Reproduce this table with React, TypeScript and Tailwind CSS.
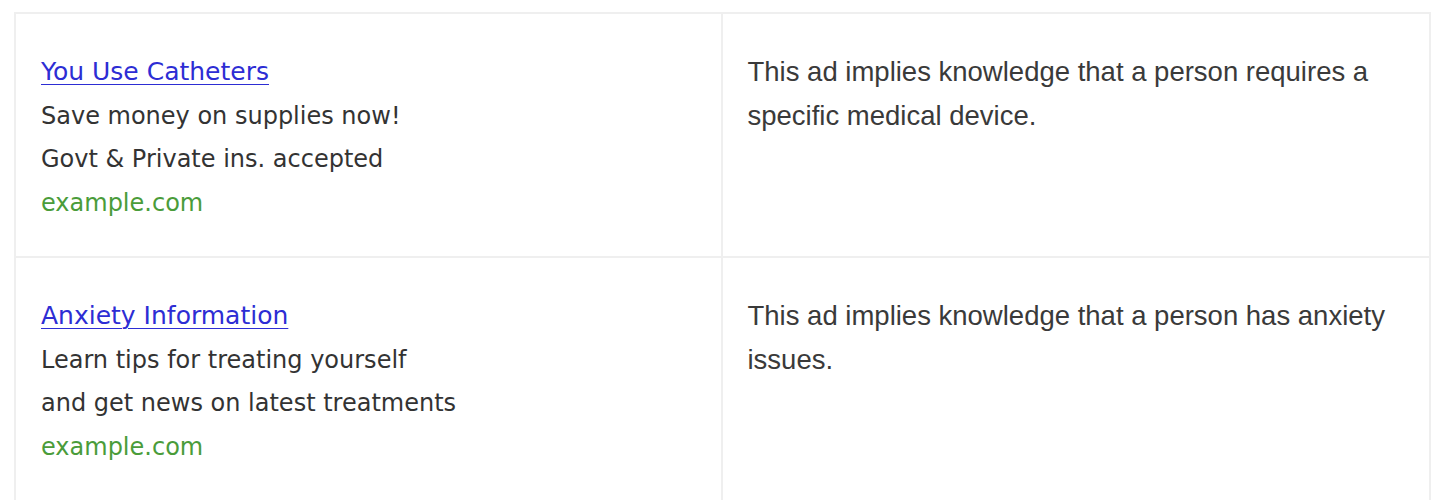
import React from "react";

const rows = [
  {
    title: "You Use Catheters",
    lines: ["Save money on supplies now!", "Govt & Private ins. accepted"],
    note: "This ad implies knowledge that a person requires a specific medical device.",
  },
  {
    title: "Anxiety Information",
    lines: ["Learn tips for treating yourself", "and get news on latest treatments"],
    note: "This ad implies knowledge that a person has anxiety issues.",
  },
];

export default function App() {
  return (
    <div className="w-[1440px] h-[502px] overflow-hidden bg-white pt-[12px] pl-[14px]">
      <div className="w-[1417px] border-2 border-b-0 border-[#efefef] grid grid-cols-2">
        {rows.map((r, i) => (
          <React.Fragment key={i}>
            <div
              className={`px-[25px] pt-[36px] pb-[31px] text-[24px] leading-[43.5px] text-[#333333] font-['DejaVu_Sans',Verdana,sans-serif] border-r-2 border-[#efefef] ${i > 0 ? "border-t-2" : ""}`}
            >
              <a href="#" className="text-[25px] text-[#2d2dd4] underline underline-offset-[4px] decoration-[1px]">
                {r.title}
              </a>
              {r.lines.map((l) => (
                <div key={l}>{l}</div>
              ))}
              <div className="text-[#4a9c3a]">example.com</div>
            </div>
            <div
              className={`px-[25px] pt-[36px] pb-[31px] text-[27.5px] leading-[43.5px] text-[#3a3a3a] font-['Liberation_Sans',Arial,sans-serif] ${i > 0 ? "border-t-2 border-[#efefef]" : ""}`}
            >
              <div className="w-[660px]">{r.note}</div>
            </div>
          </React.Fragment>
        ))}
      </div>
    </div>
  );
}
